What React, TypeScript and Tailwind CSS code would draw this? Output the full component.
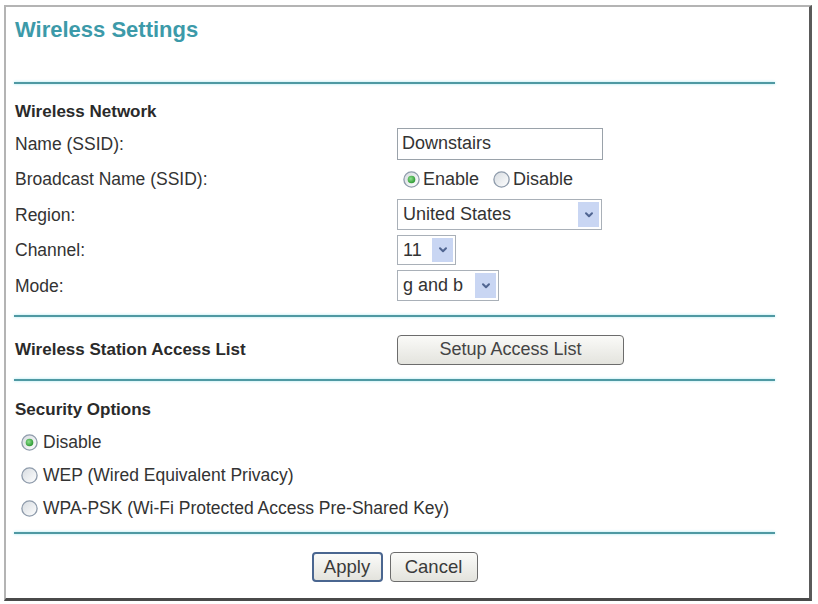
import React from "react";

function Radio({ checked }: { checked?: boolean }) {
  return (
    <svg width="17" height="17" viewBox="0 0 17 17" className="shrink-0">
      <defs>
        <linearGradient id={checked ? "rg1" : "rg0"} x1="0" y1="0" x2="1" y2="1">
          <stop offset="0" stopColor="#d6dbe0" />
          <stop offset="1" stopColor="#ffffff" />
        </linearGradient>
        <radialGradient id="dot" cx="0.4" cy="0.4" r="0.6">
          <stop offset="0" stopColor="#8fe08f" />
          <stop offset="1" stopColor="#2f9a35" />
        </radialGradient>
      </defs>
      <circle cx="8.5" cy="8.5" r="7.6" fill={`url(#${checked ? "rg1" : "rg0"})`} stroke="#8e9bab" strokeWidth="1.3" />
      {checked && <circle cx="8.5" cy="8.5" r="3.8" fill="url(#dot)" />}
    </svg>
  );
}

function Chevron() {
  return (
    <svg width="10" height="8" viewBox="0 0 10 8">
      <path d="M2 2.2 L5 5.2 L8 2.2" fill="none" stroke="#506591" strokeWidth="2" strokeLinecap="round" strokeLinejoin="round" />
    </svg>
  );
}

function Select({ value, w, h }: { value: string; w: string; h: string }) {
  return (
    <div className={`flex items-stretch border border-[#a9b0b8] bg-white ${w} ${h}`}>
      <div className="flex-1 flex items-center pl-[5px] text-[18px] text-[#333] whitespace-nowrap">{value}</div>
      <div className="w-[21px] my-[2px] mr-[2px] bg-[#c9d6f3] flex items-center justify-center">
        <Chevron />
      </div>
    </div>
  );
}

function Line() {
  return <div className="h-[2px] bg-[#4f99a3] shadow-[0_0_3px_#9fe6ee]" />;
}

function Row({ label, children }: { label: string; children: React.ReactNode }) {
  return (
    <div className="flex items-center h-[35.5px]">
      <div className="w-[383px] pl-[1px] text-[17.5px] text-[#333]">{label}</div>
      <div className="flex items-center">{children}</div>
    </div>
  );
}

export default function App() {
  return (
    <div className="w-[818px] h-[604px] bg-white overflow-hidden" style={{ fontFamily: '"Liberation Sans", Arial, sans-serif' }}>
      <div className="mt-[5px] ml-[4px] w-[808px] h-[596px] border-t-2 border-l-2 border-t-[#b4b4b4] border-l-[#b4b4b4] border-r-[3px] border-b-[3px] border-r-[#5a5a5a] border-b-[#4a4a4a] bg-white">
        <div className="ml-[8px] w-[761px]">
          <div className="pt-[10px] pl-[1px] text-[22px] leading-[26px] font-bold text-[#3c9aa9]">Wireless Settings</div>
          <div className="mt-[39px]"><Line /></div>

          <div className="mt-[18px] pl-[1px] text-[17px] leading-[20px] font-bold text-[#2a2a2a]">Wireless Network</div>
          <div className="mt-[4px]">
            <Row label="Name (SSID):">
              <div className="w-[206px] h-[32px] border border-[#9aa2aa] bg-white flex items-center pl-[4px] text-[18px] text-[#333]">Downstairs</div>
            </Row>
            <Row label="Broadcast Name (SSID):">
              <div className="flex items-center pl-[6px] text-[18px] text-[#333]">
                <Radio checked />
                <span className="ml-[3px]">Enable</span>
                <span className="ml-[14px]"><Radio /></span>
                <span className="ml-[3px]">Disable</span>
              </div>
            </Row>
            <Row label="Region:">
              <Select value="United States" w="w-[205px]" h="h-[31px]" />
            </Row>
            <Row label="Channel:">
              <Select value="11" w="w-[59px]" h="h-[30px]" />
            </Row>
            <Row label="Mode:">
              <Select value="g and b" w="w-[102px]" h="h-[31px]" />
            </Row>
          </div>

          <div className="mt-[11px]"><Line /></div>

          <div className="mt-[18px] flex items-center h-[30px]">
            <div className="w-[383px] pl-[1px] text-[17px] font-bold text-[#2a2a2a]">Wireless Station Access List</div>
            <div className="w-[227px] h-[30px] rounded-[4px] border-[1.5px] border-[#6c6c6c] bg-gradient-to-b from-[#fafaf8] to-[#e4e4de] flex items-center justify-center text-[18px] text-[#444]">
              Setup Access List
            </div>
          </div>

          <div className="mt-[14px]"><Line /></div>

          <div className="mt-[19px] pl-[1px] text-[17px] leading-[20px] font-bold text-[#2a2a2a]">Security Options</div>
          <div className="mt-[6px] text-[17.5px] text-[#333]">
            <div className="flex items-center h-[33px] pl-[7px]"><Radio checked /><span className="ml-[5px]">Disable</span></div>
            <div className="flex items-center h-[33px] pl-[7px]"><Radio /><span className="ml-[5px]">WEP (Wired Equivalent Privacy)</span></div>
            <div className="flex items-center h-[33px] pl-[7px]"><Radio /><span className="ml-[5px]">WPA-PSK (Wi-Fi Protected Access Pre-Shared Key)</span></div>
          </div>

          <div className="mt-[7px]"><Line /></div>

          <div className="mt-[18px] flex justify-center gap-[7px]">
            <div className="w-[71px] h-[30px] rounded-[4px] border-2 border-[#4a6690] bg-gradient-to-b from-[#fbfbf9] to-[#e3e3dd] flex items-center justify-center text-[18.5px] text-[#3a3a3a]">Apply</div>
            <div className="w-[88px] h-[30px] rounded-[4px] border-[1.5px] border-[#6c6c6c] bg-gradient-to-b from-[#fbfbf9] to-[#e3e3dd] flex items-center justify-center text-[18.5px] text-[#3a3a3a]">Cancel</div>
          </div>
        </div>
      </div>
    </div>
  );
}
